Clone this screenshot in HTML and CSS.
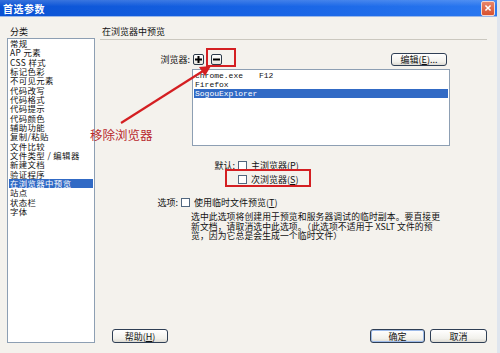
FILE: index.html
```html
<!DOCTYPE html>
<html lang="zh-Hans">

<head>
    <meta charset="UTF-8">
    <title>首选参数</title>
    <link rel="stylesheet" href="styles.css">
</head>

<body>
    <div class="window">
        <div class="titlebar">
            <span class="title">首选参数</span>
            <span class="close">
                <svg width="14" height="14" viewBox="0 0 14 14"><path d="M4 4 L10 10 M10 4 L4 10" stroke="#fff" stroke-width="1.8"/></svg>
            </span>
        </div>

        <div class="main">
            <div class="left">
                <div class="left-label">分类</div>
                <ul class="catlist">
                    <li>常规</li>
                    <li>AP 元素</li>
                    <li>CSS 样式</li>
                    <li>标记色彩</li>
                    <li>不可见元素</li>
                    <li>代码改写</li>
                    <li>代码格式</li>
                    <li>代码提示</li>
                    <li>代码颜色</li>
                    <li>辅助功能</li>
                    <li>复制/粘贴</li>
                    <li>文件比较</li>
                    <li>文件类型 / 编辑器</li>
                    <li>新建文档</li>
                    <li>验证程序</li>
                    <li class="selected">在浏览器中预览</li>
                    <li>站点</li>
                    <li>状态栏</li>
                    <li>字体</li>
                </ul>
            </div>

            <div class="right">
                <div class="heading">在浏览器中预览</div>

                <div class="browser-row">
                    <span class="browser-label">浏览器:</span>
                    <span class="tool-btn">
                        <svg width="9" height="9" viewBox="0 0 9 9"><path d="M4.5 1 V8 M1 4.5 H8" stroke="#000" stroke-width="2"/></svg>
                    </span>
                    <span class="tool-btn minus">
                        <svg width="9" height="9" viewBox="0 0 9 9"><path d="M1 4.5 H8" stroke="#000" stroke-width="2"/></svg>
                    </span>
                    <span class="btn btn-edit">编辑(<u>E</u>)...</span>
                </div>

                <ul class="browser-list">
                    <li><span class="bname">chrome.exe</span>F12</li>
                    <li><span class="bname">Firefox</span></li>
                    <li class="selected"><span class="bname">SogouExplorer</span></li>
                </ul>

                <div class="check-row default-row">
                    <span class="row-label">默认:</span>
                    <span class="checkbox"></span>
                    <span>主浏览器(<u>P</u>)</span>
                </div>
                <div class="check-row default-row second">
                    <span class="row-label"></span>
                    <span class="checkbox"></span>
                    <span>次浏览器(<u>S</u>)</span>
                </div>

                <div class="check-row option-row">
                    <span class="row-label">选项:</span>
                    <span class="checkbox"></span>
                    <span>使用临时文件预览(<u>T</u>)</span>
                </div>
                <p class="desc">选中此选项将创建用于预览和服务器调试的临时副本。要直接更<br>新文档，请取消选中此选项。（此选项不适用于 XSLT 文件的预<br>览，因为它总是会生成一个临时文件）</p>

                <div class="footer">
                    <span class="btn btn-help">帮助(<u>H</u>)</span>
                    <span class="btn btn-ok">确定</span>
                    <span class="btn btn-cancel">取消</span>
                </div>
            </div>
        </div>

        <!-- 标注 -->
        <div class="mark mark-minus"></div>
        <div class="mark mark-second"></div>
        <svg class="arrow" width="500" height="353" viewBox="0 0 500 353">
            <path d="M121 123 L203 71" stroke="#d41f22" stroke-width="2.2" fill="none"/>
            <path d="M211 66 L199 67 L205 76 Z" fill="#d41f22"/>
        </svg>
        <div class="note">移除浏览器</div>
    </div>
</body>

</html>
```

FILE: styles.css
```css
* {
    box-sizing: border-box;
}

body {
    margin: 0;
    width: 500px;
    height: 353px;
    overflow: hidden;
    background-color: #f4f2ed;
    font-family: "Noto Sans CJK SC", "DejaVu Sans", sans-serif;
    font-size: 9px;
    color: #111;
}

ul {
    margin: 0;
    padding: 0;
    list-style: none;
}

u {
    text-decoration: underline;
}

.window {
    position: relative;
    height: 353px;
    border-right: 3px solid #dfe5ee;
}

.titlebar {
    display: flex;
    align-items: center;
    justify-content: space-between;
    height: 17px;
    padding: 0 2px 0 3px;
    background: linear-gradient(to bottom, rgba(255, 255, 255, 0.18), rgba(255, 255, 255, 0) 40%),
        linear-gradient(to right, #0a52d4, #1a66e6 60%, #2a78f0);
    border-bottom: 1px solid #9bb8e8;
    color: #fff;
}

.title {
    font-size: 10px;
    font-weight: bold;
    letter-spacing: 0.5px;
}

.close {
    display: flex;
    align-items: center;
    justify-content: center;
    width: 14px;
    height: 15px;
    border: 1px solid #f4d8d0;
    border-radius: 2px;
    background: linear-gradient(to bottom, #e8856a, #d8502e);
}

.main {
    display: flex;
    height: 336px;
    padding: 0 7px 0 7px;
}

.left {
    width: 88px;
    display: flex;
    flex-direction: column;
}

.left-label {
    padding: 10px 0 0 3px;
    line-height: 10px;
    height: 21px;
}

.catlist {
    height: 305px;
    border: 1px solid #8d9fb3;
    background-color: #fff;
    padding: 0 1px;
    font-size: 8.4px;
    letter-spacing: 0.4px;
}

.catlist li {
    height: 9.33px;
    line-height: 9.33px;
    padding-left: 1px;
    white-space: nowrap;
}

.catlist li.selected,
.browser-list li.selected {
    background-color: #316ac5;
    color: #fff;
}

.right {
    flex: 1;
    margin-left: 5px;
    margin-right: 3px;
    display: flex;
    flex-direction: column;
}

.heading {
    padding-top: 10px;
    line-height: 10px;
    height: 23px;
    padding-left: 2px;
    border-bottom: 1px solid #cbc8bf;
}

.browser-row {
    display: flex;
    align-items: center;
    height: 13px;
    margin-top: 13px;
    margin-right: 40px;
}

.browser-label {
    width: 90px;
    text-align: right;
}

.tool-btn {
    display: flex;
    align-items: center;
    justify-content: center;
    width: 11px;
    height: 11px;
    margin-left: 3px;
    border: 1px solid #2d3a4a;
    border-radius: 2px;
    background: linear-gradient(to bottom, #fff, #e6e4dc);
}

.tool-btn.minus {
    margin-left: 7px;
}

.btn {
    display: flex;
    align-items: center;
    justify-content: center;
    height: 14px;
    border: 1px solid #2f3f55;
    border-radius: 3px;
    background: linear-gradient(to bottom, #ffffff, #f2f1ec 70%, #dcdad2);
}

.btn-edit {
    margin-left: auto;
    width: 56px;
    height: 13px;
}

.browser-list {
    margin: 3px 0 0 92px;
    width: 258px;
    height: 77px;
    border: 1px solid #8d9fb3;
    background-color: #fff;
    padding: 1px 1px;
    font-family: "Liberation Mono", "DejaVu Sans Mono", monospace;
    font-size: 8px;
}

.browser-list li {
    height: 9px;
    line-height: 9px;
    padding-left: 1px;
    white-space: pre;
}

.bname {
    display: inline-block;
    width: 64px;
}

.check-row {
    display: flex;
    align-items: center;
    height: 10px;
}

.default-row {
    margin-top: 14px;
}

.default-row.second {
    margin-top: 4px;
}

.default-row .row-label {
    width: 135px;
}

.option-row {
    margin-top: 13px;
}

.option-row .row-label {
    width: 78px;
}

.row-label {
    text-align: right;
}

.checkbox {
    width: 9px;
    height: 9px;
    margin: 0 4px 0 3px;
    border: 1px solid #51677f;
    background-color: #fff;
}

.desc {
    margin: 5px 0 0 91px;
    font-size: 8.8px;
    line-height: 9.6px;
    white-space: nowrap;
    letter-spacing: 0.1px;
}

.footer {
    display: flex;
    margin-top: auto;
    margin-bottom: 10px;
    padding-left: 12px;
}

.btn-help {
    width: 56px;
}

.btn-ok {
    margin-left: auto;
    width: 55px;
    box-shadow: inset 0 0 0 1px #9ebbe9;
}

.btn-cancel {
    width: 57px;
    margin-left: 5px;
}

.mark {
    position: absolute;
    border: 2px solid #d41f22;
}

.mark-minus {
    left: 206px;
    top: 48px;
    width: 30px;
    height: 19px;
}

.mark-second {
    left: 225px;
    top: 169px;
    width: 86px;
    height: 18px;
}

.arrow {
    position: absolute;
    left: 0;
    top: 0;
    pointer-events: none;
}

.note {
    position: absolute;
    left: 90px;
    top: 126px;
    font-size: 12.5px;
    line-height: 17px;
    color: #b8282c;
}
```
